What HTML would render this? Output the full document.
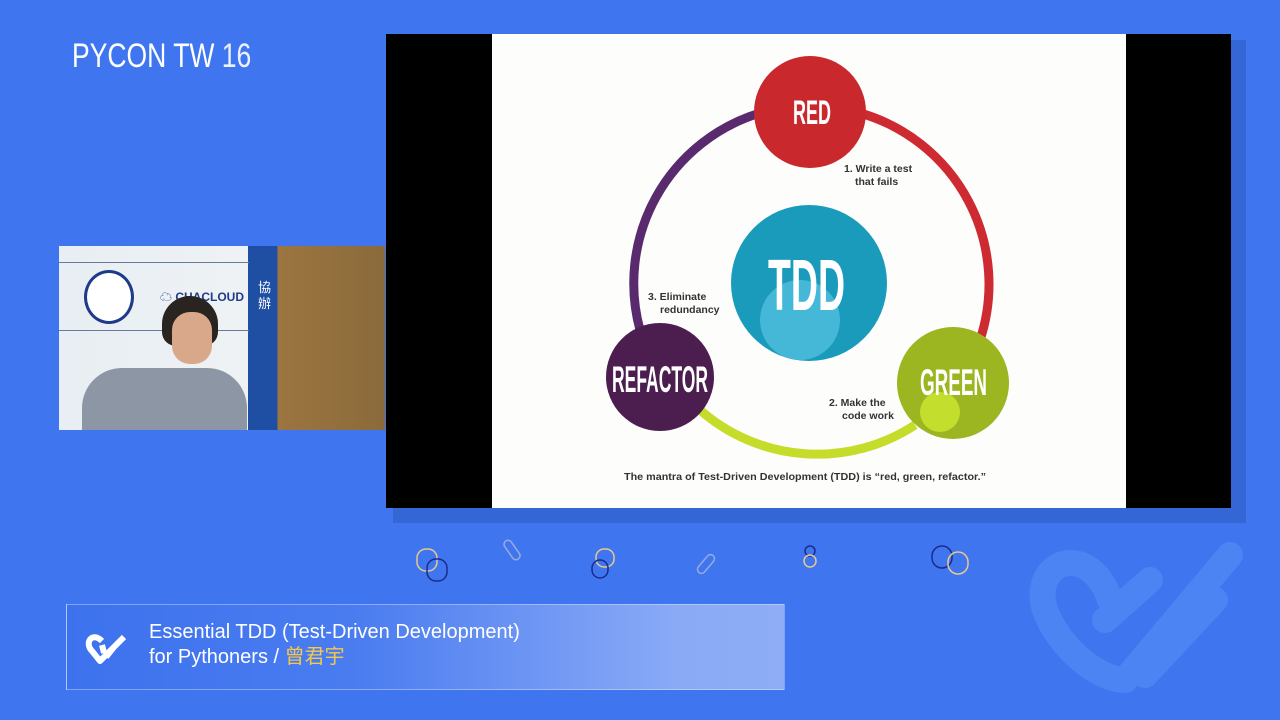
<!DOCTYPE html><html><head><meta charset="utf-8"><style>
body{margin:0;width:1280px;height:720px;overflow:hidden;background:#3f76f0;font-family:"Liberation Sans","Noto Sans CJK TC",sans-serif;position:relative}
.a{position:absolute}
</style></head><body>
<div class="a" style="left:72px;top:36px;color:#fff;font-size:34px;line-height:40px;transform:scaleX(0.78);transform-origin:0 0;white-space:nowrap">PYCON TW <span style="font-weight:100;opacity:.9">16</span></div>
<div class="a" style="left:393px;top:40px;width:853px;height:483px;background:#3466d6"></div>
<div class="a" style="left:386px;top:34px;width:845px;height:474px;background:#000"></div>
<div class="a" style="left:492px;top:34px;width:634px;height:474px;background:#fdfdfb"></div>
<svg class="a" style="left:0;top:0" width="1280" height="720">
<path d="M760 113 A178 178 0 0 0 640 330" stroke="#5a2a6e" stroke-width="9" fill="none"/>
<path d="M860 113 A178 178 0 0 1 980 340" stroke="#cd2b31" stroke-width="9" fill="none"/>
<path d="M700 410 A178 178 0 0 0 915 425" stroke="#c5dc2a" stroke-width="9" fill="none"/>
<circle cx="810" cy="112" r="56" fill="#c9282d"/>
<circle cx="953" cy="383" r="56" fill="#9bb620"/><circle cx="940" cy="412" r="20" fill="#c3de2c"/>
<circle cx="660" cy="377" r="54" fill="#4c1d4f"/>
<circle cx="809" cy="283" r="78" fill="#1a9bbb"/><circle cx="800" cy="320" r="40" fill="#45b8d8"/>
<g font-family="Liberation Sans,sans-serif" font-weight="bold" fill="#fff">
<text x="793" y="124" font-size="34" textLength="38" lengthAdjust="spacingAndGlyphs">RED</text>
<text x="768" y="310" font-size="72" textLength="77" lengthAdjust="spacingAndGlyphs">TDD</text>
<text x="920" y="395" font-size="37" textLength="67" lengthAdjust="spacingAndGlyphs">GREEN</text>
<text x="612" y="392" font-size="37" textLength="96" lengthAdjust="spacingAndGlyphs">REFACTOR</text></g>
<g font-family="Liberation Sans,sans-serif" font-weight="bold" font-size="10.5" fill="#333">
<text x="844" y="172">1. Write a test</text><text x="855" y="185">that fails</text>
<text x="648" y="300">3. Eliminate</text><text x="660" y="313">redundancy</text>
<text x="829" y="406">2. Make the</text><text x="842" y="419">code work</text>
<text x="624" y="480" font-size="10.5" textLength="362" lengthAdjust="spacingAndGlyphs">The mantra of Test-Driven Development (TDD) is “red, green, refactor.”</text></g>
<g fill="none" stroke-width="1.5">
<rect x="417" y="549" width="20" height="22" rx="9" stroke="#e8c98a"/><rect x="427" y="559" width="20" height="22" rx="9" stroke="#1a2b8a"/>
<rect x="508" y="539" width="8" height="22" rx="4" stroke="#9ad" transform="rotate(-35 512 550)"/>
<rect x="596" y="549" width="18" height="18" rx="8" stroke="#e8c98a"/><rect x="592" y="560" width="16" height="18" rx="8" stroke="#1a2b8a"/>
<rect x="702" y="553" width="8" height="22" rx="4" stroke="#9ad" transform="rotate(40 706 564)"/>
<circle cx="810" cy="551" r="5" stroke="#1a2b8a"/><circle cx="810" cy="561" r="6" stroke="#e8c98a"/>
<rect x="932" y="546" width="20" height="22" rx="10" stroke="#1a2b8a"/><rect x="948" y="552" width="20" height="22" rx="10" stroke="#e8c98a"/>
</g>
<g stroke="#4d84f4" stroke-width="26" fill="none" stroke-linejoin="round" stroke-linecap="round">
<path d="M1110 600 C1090 540 1030 560 1045 610 C1060 650 1100 680 1125 680 L1230 555"/>
<path d="M1105 620 L1150 580 M1145 675 L1215 600"/>
</g>
</svg>
<div class="a" style="left:59px;top:246px;width:326px;height:184px;background:linear-gradient(90deg,#e8eef3 0,#eef2f4 58%,#1f4fa3 58%,#1f4fa3 67%,#9c7540 67%,#8a6a3b 100%)"></div>
<div class="a" style="left:59px;top:262px;width:190px;height:1px;background:#6a7a9a"></div>
<div class="a" style="left:59px;top:330px;width:190px;height:1px;background:#6a7a9a"></div>
<div class="a" style="left:84px;top:270px;width:44px;height:48px;border-radius:50%;border:3px solid #1e3a8a;background:#fff"></div>
<div class="a" style="left:160px;top:288px;color:#1e3a8a;font-size:12px;font-weight:bold">☁ CHACLOUD</div>
<div class="a" style="left:258px;top:280px;color:#fff;font-size:13px;line-height:16px">協<br>辦</div>
<div class="a" style="left:162px;top:296px;width:56px;height:50px;border-radius:28px 28px 14px 14px;background:#2a2420"></div>
<div class="a" style="left:172px;top:312px;width:40px;height:52px;border-radius:18px;background:#d9a88a"></div>
<div class="a" style="left:82px;top:368px;width:165px;height:62px;border-radius:40px 40px 0 0;background:#8d96a4"></div>
<div class="a" style="left:66px;top:604px;width:717px;height:84px;border:1px solid rgba(255,255,255,.35);background:linear-gradient(90deg,#3d72ee 0,#4a7cf0 40%,#8aaaf6 85%,#8eadf6 100%)"></div>
<svg class="a" style="left:82px;top:627px" width="52" height="42"><path d="M20 14 C10 4 2 16 10 24 L18 34 L42 10 M22 26 L20 18 M32 20 L24 30" stroke="#fff" stroke-width="6" fill="none" stroke-linejoin="round"/></svg>
<div class="a" style="left:149px;top:620px;color:#fff;font-size:20px;line-height:25px;white-space:nowrap">Essential TDD (Test-Driven Development)<br>for Pythoners / <span style="color:#f5c84a">曾君宇</span></div>
</body></html>
